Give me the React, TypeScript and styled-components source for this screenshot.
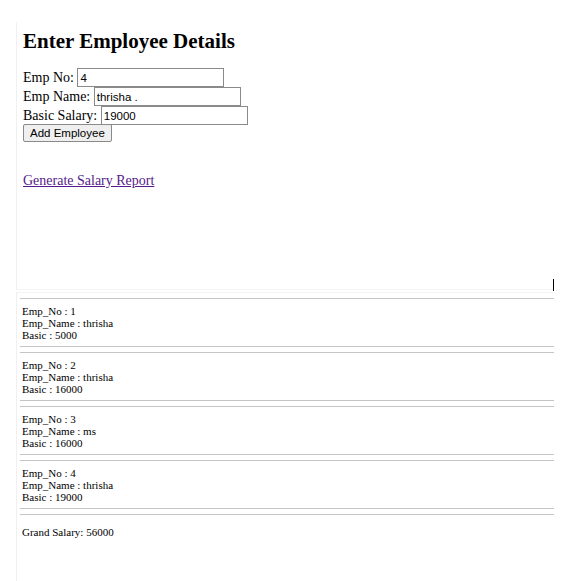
import React from 'react';
import styled, { createGlobalStyle } from 'styled-components';

const GlobalStyle = createGlobalStyle`
  html, body {
    margin: 0;
    padding: 0;
    background: #ffffff;
  }
  body {
    font-family: "Liberation Serif", "Times New Roman", serif;
    color: #000000;
  }
`;

const Page = styled.div`
  width: 584px;
  height: 581px;
  padding-left: 16px;
  box-sizing: border-box;
  overflow: hidden;
  display: flex;
  flex-direction: column;
`;

const FormPanel = styled.section`
  position: relative;
  margin-top: 22px;
  width: 538px;
  height: 268px;
  box-sizing: border-box;
  padding: 7px 0 0 6px;
  border-left: 1px solid #f0f0f0;
  border-bottom: 1px solid #f4f4f4;
  display: flex;
  flex-direction: column;
`;

const Heading = styled.h2`
  margin: 0 0 15px;
  font-size: 21px;
  line-height: 24px;
  font-weight: bold;
`;

const Row = styled.label`
  display: flex;
  align-items: center;
  height: 19px;
  font-size: 14px;
  white-space: pre;
`;

const TextInput = styled.input`
  width: 147px;
  height: 19px;
  box-sizing: border-box;
  margin: 0;
  padding: 0 2px;
  border: 1px solid #8a8a8a;
  font-family: "Liberation Sans", Arial, sans-serif;
  font-size: 11.5px;
  color: #000;
  background: #fff;
  outline: none;
`;

const Button = styled.button`
  align-self: flex-start;
  height: 18px;
  margin-top: -1px;
  padding: 0 6px;
  border: 1px solid #8a8a8a;
  border-radius: 2px;
  background: #efefef;
  font-family: "Liberation Sans", Arial, sans-serif;
  font-size: 11.5px;
  line-height: 16px;
  color: #000;
`;

const ReportLink = styled.a`
  align-self: flex-start;
  margin-top: 31px;
  font-size: 14px;
  line-height: 16px;
  color: #551a8b;
  text-decoration: underline;
`;

const Caret = styled.span`
  position: absolute;
  left: 536px;
  top: 257px;
  width: 1px;
  height: 12px;
  background: #000;
`;

const ReportPanel = styled.section`
  margin-top: 2px;
  width: 538px;
  flex: 1;
  box-sizing: border-box;
  padding-top: 5px;
  border-left: 1px solid #f0f0f0;
  border-top: 1px solid #f4f4f4;
  display: flex;
  flex-direction: column;
`;

const Record = styled.div`
  margin: 0 0 5px 3px;
  width: 534px;
  padding: 6px 0 5px 2px;
  box-sizing: border-box;
  border-top: 1px solid #c4c4c4;
  border-bottom: 1px solid #c4c4c4;
`;

const Rule = styled.div`
  margin-left: 3px;
  width: 534px;
  border-top: 1px solid #c4c4c4;
`;

const Line = styled.div`
  font-size: 11px;
  line-height: 12px;
`;

const Total = styled(Line)`
  margin: 11px 0 0 5px;
`;

const employees = [
  { no: 1, name: 'thrisha', basic: 5000 },
  { no: 2, name: 'thrisha', basic: 16000 },
  { no: 3, name: 'ms', basic: 16000 },
  { no: 4, name: 'thrisha', basic: 19000 },
];

export default function App() {
  const total = employees.reduce((sum, e) => sum + e.basic, 0);
  return (
    <>
      <GlobalStyle />
      <Page>
        <FormPanel>
          <Heading>Enter Employee Details</Heading>
          <Row>
            Emp No: <TextInput value="4" readOnly />
          </Row>
          <Row>
            Emp Name: <TextInput value="thrisha ." readOnly />
          </Row>
          <Row>
            Basic Salary: <TextInput value="19000" readOnly />
          </Row>
          <Button type="button">Add Employee</Button>
          <ReportLink href="#report">Generate Salary Report</ReportLink>
          <Caret />
        </FormPanel>
        <ReportPanel id="report">
          {employees.map((e) => (
            <Record key={e.no}>
              <Line>Emp_No : {e.no}</Line>
              <Line>Emp_Name : {e.name}</Line>
              <Line>Basic : {e.basic}</Line>
            </Record>
          ))}
          <Rule />
          <Total>Grand Salary: {total}</Total>
        </ReportPanel>
      </Page>
    </>
  );
}
